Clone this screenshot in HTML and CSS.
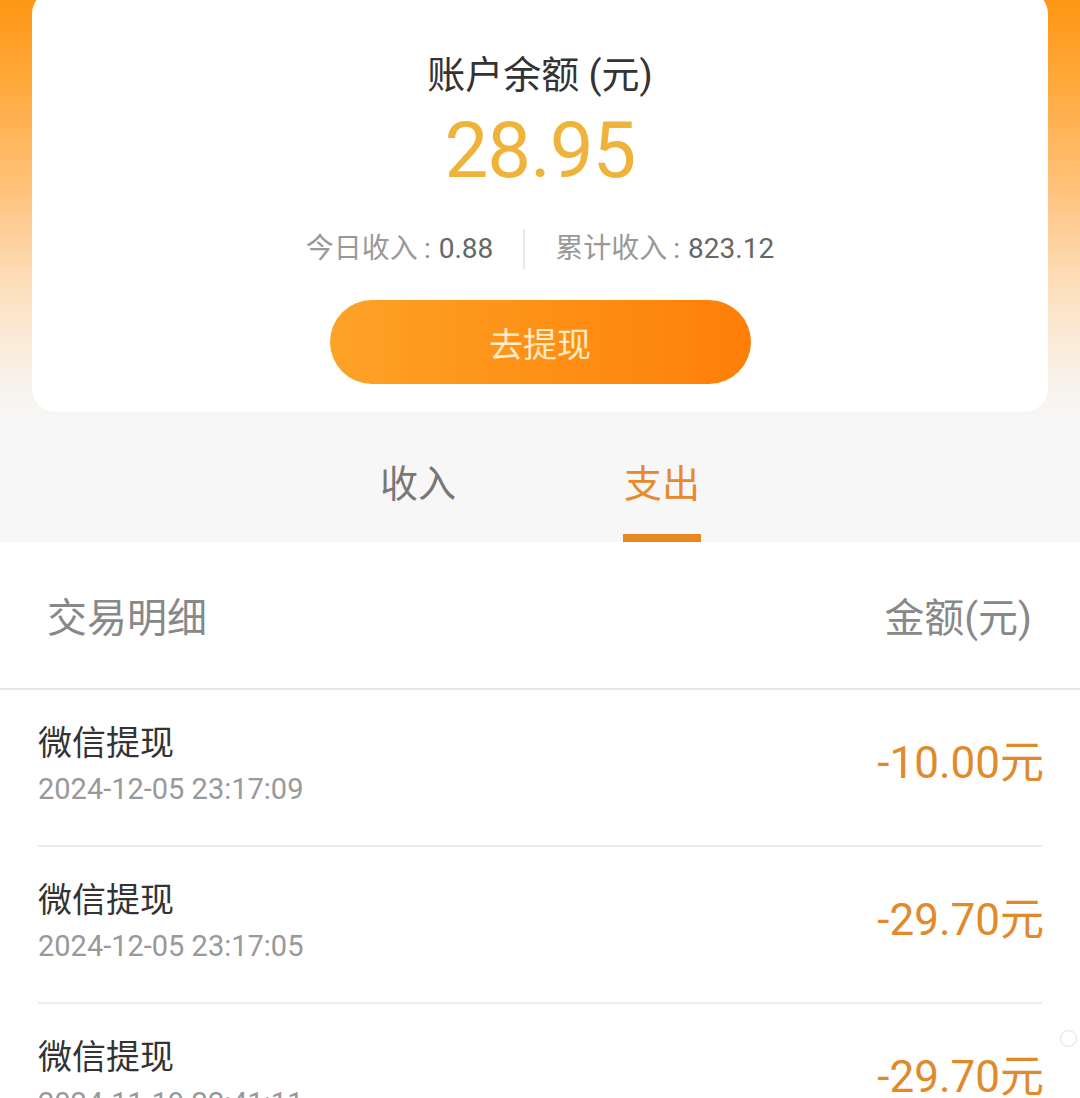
FILE: index.html
```html
<!DOCTYPE html>
<html lang="zh-CN">
<head>
<meta charset="utf-8">
<title>账户余额</title>
<link rel="stylesheet" href="styles.css">
</head>
<body>
<div class="top">
  <div class="card">
    <div class="card-title">账户余额 (元)</div>
    <div class="balance">28.95</div>
    <div class="stats">
      <div class="stat"><span class="stat-label">今日收入</span><span class="stat-sep">:</span><span class="stat-val">0.88</span></div>
      <div class="stat-divider"></div>
      <div class="stat"><span class="stat-label">累计收入</span><span class="stat-sep">:</span><span class="stat-val">823.12</span></div>
    </div>
    <div class="btn">去提现</div>
  </div>
  <div class="tabs">
    <div class="tab">收入</div>
    <div class="tab active">支出<span class="tab-line"></span></div>
  </div>
</div>
<div class="list">
  <div class="list-head">
    <span class="head-left">交易明细</span>
    <span class="head-right">金额(元)</span>
  </div>
  <div class="rows">
    <div class="row">
      <div class="row-info">
        <div class="row-title">微信提现</div>
        <div class="row-date">2024-12-05 23:17:09</div>
      </div>
      <div class="row-amount">-10.00元</div>
    </div>
    <div class="row">
      <div class="row-info">
        <div class="row-title">微信提现</div>
        <div class="row-date">2024-12-05 23:17:05</div>
      </div>
      <div class="row-amount">-29.70元</div>
    </div>
    <div class="row">
      <div class="row-info">
        <div class="row-title">微信提现</div>
        <div class="row-date">2024-11-19 22:41:11</div>
      </div>
      <div class="row-amount">-29.70元</div>
    </div>
  </div>
  <div class="scroll-dot"></div>
</div>
</body>
</html>
```

FILE: styles.css
```css
* { box-sizing: border-box; }
html, body { margin: 0; padding: 0; }
body {
  width: 1080px;
  height: 1098px;
  overflow: hidden;
  background: #ffffff;
  font-family: "Roboto", "Noto Sans CJK SC", sans-serif;
  color: #333;
}
.top {
  background: linear-gradient(180deg, #ff9410 0px, #ffa83a 90px, #ffc27c 200px, #fde0bf 300px, #f8f2ea 390px, #f7f7f7 430px, #f7f7f7 100%);
  padding: 0 32px;
}
.card {
  margin-top: -10px;
  height: 422px;
  background: #ffffff;
  border-radius: 24px;
  display: flex;
  flex-direction: column;
  align-items: center;
  padding-top: 62px;
}
.card-title {
  font-size: 38px;
  line-height: 46px;
  color: #333;
}
.balance {
  margin-top: 7px;
  font-size: 78px;
  line-height: 92px;
  color: #f0b33a;
  letter-spacing: -1px;
}
.stats {
  margin-top: 32px;
  display: flex;
  align-items: center;
  height: 40px;
}
.stat {
  font-size: 28px;
  line-height: 40px;
  color: #999;
  display: flex;
  align-items: center;
}
.stat-sep { margin: 0 8px 0 6px; color: #888; }
.stat-val { color: #666; }
.stat-divider {
  width: 2px;
  height: 40px;
  background: #e8e8e8;
  margin: 0 30px;
}
.btn {
  margin-top: 31px;
  width: 421px;
  height: 84px;
  border-radius: 42px;
  background: linear-gradient(90deg, #fda328 0%, #fe8f14 55%, #fe7f08 100%);
  color: #fdebc6;
  font-size: 34px;
  display: flex;
  align-items: center;
  justify-content: center;
}
.tabs {
  height: 130px;
  display: flex;
  justify-content: center;
}
.tab {
  width: 244px;
  display: flex;
  justify-content: center;
  padding-top: 47px;
  font-size: 38px;
  line-height: 50px;
  color: #777;
  position: relative;
}
.tab.active { color: #e8892a; }
.tab-line {
  position: absolute;
  bottom: 0;
  left: 50%;
  margin-left: -39px;
  width: 78px;
  height: 8px;
  background: #e8861f;
}
.list { position: relative; }
.list-head {
  height: 148px;
  padding: 0 48px 0 47px;
  display: flex;
  justify-content: space-between;
  align-items: center;
  border-bottom: 2px solid #e6e6e6;
  font-size: 40px;
  color: #888;
}
.rows { padding: 0 38px; }
.row {
  height: 157px;
  border-bottom: 2px solid #ececec;
  display: flex;
  justify-content: space-between;
  align-items: center;
}
.row-info { margin-top: -6px; }
.row-title {
  font-size: 34px;
  line-height: 44px;
  color: #333;
}
.row-date {
  margin-top: 4px;
  font-size: 29px;
  line-height: 40px;
  color: #999;
}
.row-amount {
  font-size: 44px;
  line-height: 56px;
  color: #e08a2c;
  margin-right: -2px;
  margin-bottom: 10px;
}
.scroll-dot {
  position: absolute;
  right: 3px;
  top: 488px;
  width: 17px;
  height: 17px;
  border: 1.5px solid #dedede;
  border-radius: 50%;
}
```
